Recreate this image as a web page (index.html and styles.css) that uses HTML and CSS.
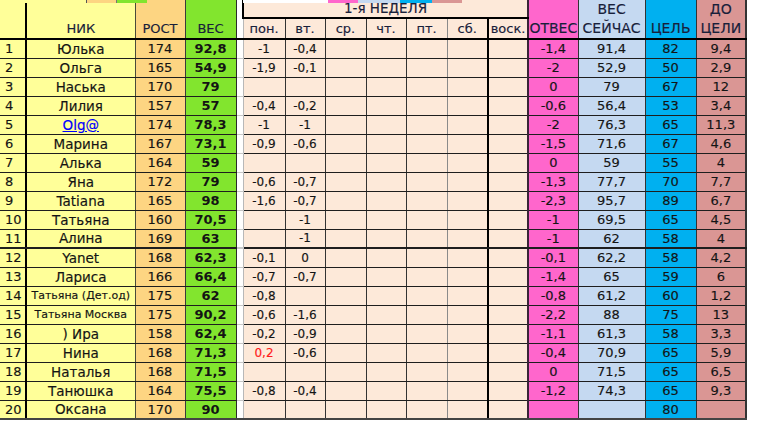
FILE: index.html
```html
<!DOCTYPE html>
<html lang="ru">
<head>
<meta charset="utf-8">
<title>Таблица</title>
<link rel="stylesheet" href="styles.css">
</head>
<body>
<div class="sheet">
<div class="ghost" aria-hidden="true">
<span class="gy1"></span><span class="go"></span><span class="gg"></span><span class="gw"></span><span class="gp"></span><span class="gc"></span><span class="gt"></span><span class="gl"></span>
</div>
<table class="tbl">
<colgroup>
<col style="width:26px"><col style="width:109px"><col style="width:50px"><col style="width:51px"><col style="width:7px">
<col style="width:42px"><col style="width:40px"><col style="width:41px"><col style="width:40px"><col style="width:41px"><col style="width:41px"><col style="width:40px">
<col style="width:50px"><col style="width:67px"><col style="width:51px"><col style="width:50px">
</colgroup>
<thead>
<tr class="ha">
<th class="n" rowspan="2"></th>
<th class="nk hb" rowspan="2">НИК</th>
<th class="r hb" rowspan="2">РОСТ</th>
<th class="w hb" rowspan="2">ВЕС</th>
<th class="g" rowspan="2"></th>
<th class="week" colspan="7">1-я НЕДЕЛЯ</th>
<th class="o hb hr" rowspan="2">ОТВЕС</th>
<th class="c hr" rowspan="2">ВЕС<br>СЕЙЧАС</th>
<th class="t hb hr" rowspan="2">ЦЕЛЬ</th>
<th class="l hr" rowspan="2">ДО<br>ЦЕЛИ</th>
</tr>
<tr class="hd">
<th class="d">пон.</th><th class="d">вт.</th><th class="d">ср.</th><th class="d">чт.</th><th class="d">пт.</th><th class="d">сб.</th><th class="d">воск.</th>
</tr>
</thead>
<tbody>
<tr><td class="n">1</td><td class="nk">Юлька</td><td class="r">174</td><td class="w">92,8</td><td class="g"></td><td class="d">-1</td><td class="d">-0,4</td><td class="d"></td><td class="d"></td><td class="d"></td><td class="d"></td><td class="d"></td><td class="o">-1,4</td><td class="c">91,4</td><td class="t">82</td><td class="l">9,4</td></tr>
<tr><td class="n">2</td><td class="nk">Ольга</td><td class="r">165</td><td class="w">54,9</td><td class="g"></td><td class="d">-1,9</td><td class="d">-0,1</td><td class="d"></td><td class="d"></td><td class="d"></td><td class="d"></td><td class="d"></td><td class="o">-2</td><td class="c">52,9</td><td class="t">50</td><td class="l">2,9</td></tr>
<tr><td class="n">3</td><td class="nk">Наська</td><td class="r">170</td><td class="w">79</td><td class="g"></td><td class="d"></td><td class="d"></td><td class="d"></td><td class="d"></td><td class="d"></td><td class="d"></td><td class="d"></td><td class="o">0</td><td class="c">79</td><td class="t">67</td><td class="l">12</td></tr>
<tr><td class="n">4</td><td class="nk">Лилия</td><td class="r">157</td><td class="w">57</td><td class="g"></td><td class="d">-0,4</td><td class="d">-0,2</td><td class="d"></td><td class="d"></td><td class="d"></td><td class="d"></td><td class="d"></td><td class="o">-0,6</td><td class="c">56,4</td><td class="t">53</td><td class="l">3,4</td></tr>
<tr><td class="n">5</td><td class="nk"><a class="link" href="#">Olg@</a></td><td class="r">174</td><td class="w">78,3</td><td class="g"></td><td class="d">-1</td><td class="d">-1</td><td class="d"></td><td class="d"></td><td class="d"></td><td class="d"></td><td class="d"></td><td class="o">-2</td><td class="c">76,3</td><td class="t">65</td><td class="l">11,3</td></tr>
<tr><td class="n">6</td><td class="nk">Марина</td><td class="r">167</td><td class="w">73,1</td><td class="g"></td><td class="d">-0,9</td><td class="d">-0,6</td><td class="d"></td><td class="d"></td><td class="d"></td><td class="d"></td><td class="d"></td><td class="o">-1,5</td><td class="c">71,6</td><td class="t">67</td><td class="l">4,6</td></tr>
<tr><td class="n">7</td><td class="nk">Алька</td><td class="r">164</td><td class="w">59</td><td class="g"></td><td class="d"></td><td class="d"></td><td class="d"></td><td class="d"></td><td class="d"></td><td class="d"></td><td class="d"></td><td class="o">0</td><td class="c">59</td><td class="t">55</td><td class="l">4</td></tr>
<tr><td class="n">8</td><td class="nk">Яна</td><td class="r">172</td><td class="w">79</td><td class="g"></td><td class="d">-0,6</td><td class="d">-0,7</td><td class="d"></td><td class="d"></td><td class="d"></td><td class="d"></td><td class="d"></td><td class="o">-1,3</td><td class="c">77,7</td><td class="t">70</td><td class="l">7,7</td></tr>
<tr><td class="n">9</td><td class="nk">Tatiana</td><td class="r">165</td><td class="w">98</td><td class="g"></td><td class="d">-1,6</td><td class="d">-0,7</td><td class="d"></td><td class="d"></td><td class="d"></td><td class="d"></td><td class="d"></td><td class="o">-2,3</td><td class="c">95,7</td><td class="t">89</td><td class="l">6,7</td></tr>
<tr><td class="n">10</td><td class="nk">Татьяна</td><td class="r">160</td><td class="w">70,5</td><td class="g"></td><td class="d"></td><td class="d">-1</td><td class="d"></td><td class="d"></td><td class="d"></td><td class="d"></td><td class="d"></td><td class="o">-1</td><td class="c">69,5</td><td class="t">65</td><td class="l">4,5</td></tr>
<tr class="thick"><td class="n">11</td><td class="nk">Алина</td><td class="r">169</td><td class="w">63</td><td class="g"></td><td class="d"></td><td class="d">-1</td><td class="d"></td><td class="d"></td><td class="d"></td><td class="d"></td><td class="d"></td><td class="o">-1</td><td class="c">62</td><td class="t">58</td><td class="l">4</td></tr>
<tr><td class="n">12</td><td class="nk">Yanet</td><td class="r">168</td><td class="w">62,3</td><td class="g"></td><td class="d">-0,1</td><td class="d">0</td><td class="d"></td><td class="d"></td><td class="d"></td><td class="d"></td><td class="d"></td><td class="o">-0,1</td><td class="c">62,2</td><td class="t">58</td><td class="l">4,2</td></tr>
<tr><td class="n">13</td><td class="nk">Лариса</td><td class="r">166</td><td class="w">66,4</td><td class="g"></td><td class="d">-0,7</td><td class="d">-0,7</td><td class="d"></td><td class="d"></td><td class="d"></td><td class="d"></td><td class="d"></td><td class="o">-1,4</td><td class="c">65</td><td class="t">59</td><td class="l">6</td></tr>
<tr><td class="n">14</td><td class="nk sm">Татьяна (Дет.од)</td><td class="r">175</td><td class="w">62</td><td class="g"></td><td class="d">-0,8</td><td class="d"></td><td class="d"></td><td class="d"></td><td class="d"></td><td class="d"></td><td class="d"></td><td class="o">-0,8</td><td class="c">61,2</td><td class="t">60</td><td class="l">1,2</td></tr>
<tr><td class="n">15</td><td class="nk sm">Татьяна Москва</td><td class="r">175</td><td class="w">90,2</td><td class="g"></td><td class="d">-0,6</td><td class="d">-1,6</td><td class="d"></td><td class="d"></td><td class="d"></td><td class="d"></td><td class="d"></td><td class="o">-2,2</td><td class="c">88</td><td class="t">75</td><td class="l">13</td></tr>
<tr><td class="n">16</td><td class="nk">) Ира</td><td class="r">158</td><td class="w">62,4</td><td class="g"></td><td class="d">-0,2</td><td class="d">-0,9</td><td class="d"></td><td class="d"></td><td class="d"></td><td class="d"></td><td class="d"></td><td class="o">-1,1</td><td class="c">61,3</td><td class="t">58</td><td class="l">3,3</td></tr>
<tr><td class="n">17</td><td class="nk">Нина</td><td class="r">168</td><td class="w">71,3</td><td class="g"></td><td class="d red">0,2</td><td class="d">-0,6</td><td class="d"></td><td class="d"></td><td class="d"></td><td class="d"></td><td class="d"></td><td class="o">-0,4</td><td class="c">70,9</td><td class="t">65</td><td class="l">5,9</td></tr>
<tr><td class="n">18</td><td class="nk">Наталья</td><td class="r">168</td><td class="w">71,5</td><td class="g"></td><td class="d"></td><td class="d"></td><td class="d"></td><td class="d"></td><td class="d"></td><td class="d"></td><td class="d"></td><td class="o">0</td><td class="c">71,5</td><td class="t">65</td><td class="l">6,5</td></tr>
<tr><td class="n">19</td><td class="nk">Танюшка</td><td class="r">164</td><td class="w">75,5</td><td class="g"></td><td class="d">-0,8</td><td class="d">-0,4</td><td class="d"></td><td class="d"></td><td class="d"></td><td class="d"></td><td class="d"></td><td class="o">-1,2</td><td class="c">74,3</td><td class="t">65</td><td class="l">9,3</td></tr>
<tr class="last"><td class="n">20</td><td class="nk">Оксана</td><td class="r">170</td><td class="w">90</td><td class="g"></td><td class="d"></td><td class="d"></td><td class="d"></td><td class="d"></td><td class="d"></td><td class="d"></td><td class="d"></td><td class="o"></td><td class="c"></td><td class="t">80</td><td class="l"></td></tr>
</tbody>
</table>
</div>
</body>
</html>
```
FILE: styles.css
```css
* { box-sizing: border-box; }
body {
  margin: 0;
  background: #fff;
  font-family: "DejaVu Sans", "Liberation Sans", sans-serif;
  color: #141414;
}
.sheet { position: relative; width: 770px; height: 437px; overflow: hidden; }

/* sliver of the row above, cut by the screenshot edge */
.ghost {
  position: absolute;
  left: 0;
  top: 0;
  height: 3px;
  display: flex;
  z-index: 2;
}
.ghost span { display: block; height: 3px; flex: none; }
.gy1 { width: 87px; border-right: 1px solid #555; background: #ffff99; }
.go  { width: 30px; background: #fdd582; border-right: 1px solid #777; }
.gg  { width: 30px; background: #82e52e; }
.gw  { width: 85px; margin-left: 96px; background: #fff; }
.gp  { width: 30px; background: #ff66cc; }
.gc  { width: 42px; background: #c5d9f1; }
.gt  { width: 32px; background: #00b0f0; }
.gl  { width: 30px; background: #da9694; }

.tbl {
  border-collapse: collapse;
  table-layout: fixed;
  width: 746px;
}
.tbl th, .tbl td {
  padding: 0;
  text-align: center;
  white-space: nowrap;
  overflow: hidden;
  -webkit-text-stroke: 0.15px currentColor;
}
.tbl th { font-weight: normal; color: #18203a; }

/* header */
.ha th { height: 18px; }
.hd th { height: 20px; }
.hb { vertical-align: bottom; font-size: 13px; line-height: 19px; padding-bottom: 1px; }
.hr { font-size: 14px; line-height: 19px; }
.c.hr, .l.hr { vertical-align: top; padding-top: 0; }
.o.hb, .t.hb { font-size: 14px; }
.week {
  background: #fde9d9;
  font-size: 13.5px;
  line-height: 17px;
  border-left: 2px solid #000;
  border-bottom: 2px solid #000;
  border-right: 2px solid #3a2438;
}
.hd th.d {
  font-size: 13px;
  vertical-align: bottom;
  padding-bottom: 2px;
}
thead th { border-bottom: 2px solid #000; }

/* column colours */
.n  { background: #ffff99; }
.nk { background: #ffff99; }
.r  { background: #fdd582; }
.w  { background: #82e52e; }
.g  { background: #fff; }
.d  { background: #fde9d9; }
.o  { background: #ff66cc; }
.c  { background: #c5d9f1; }
.t  { background: #00b0f0; }
.l  { background: #da9694; }

/* borders */
.tbl td { border-bottom: 1px solid #1e1e1e; height: 19px; }
.n  { border-right: 2px solid #000; }
.nk { border-right: 1px solid #4a4a3a; }
.r  { border-right: 1px solid #3a3a3a; }
.w  { border-right: 1px solid #2a2a2a; }
.g  { border-right: 1px solid #b8b8b8; }
.tbl td.g { border-bottom: 1px solid #c8c8c8; }
.d  { border-right: 1px solid #333; }
.d:nth-child(10) { border-right-color: #8a8a8a; }
.d:nth-child(11) { border-right: 2px solid #000; }
.d:nth-child(12) { border-right: 2px solid #3a2438; }
.hd th.d:nth-child(5) { border-right-color: #8a8a8a; }
.hd th.d:nth-child(6) { border-right: 2px solid #000; }
.hd th.d:nth-child(7) { border-right: 2px solid #3a2438; }
.hd th.d:nth-child(1) { border-left: 1px solid #b8b8b8; }
.o  { border-right: 1px solid #333; }
.c  { border-right: 1px solid #333; }
.t  { border-right: 1px solid #333; }
.l  { border-right: 2px solid #333; }
.tbl tr.thick td { border-bottom-width: 2px; }
.tbl tr.last td { border-bottom: 2px solid #444; }

/* cell text */
.tbl td.n  { text-align: left; padding-left: 5px; font-size: 13px; }
.tbl td.nk { font-size: 13.5px; }
.tbl td.nk.sm { font-size: 11px; }
.tbl td.r  { font-size: 13px; }
.tbl td.w  { font-size: 13px; font-weight: bold; -webkit-text-stroke: 0; }
.tbl td.d  { font-size: 12px; }
.tbl td.o, .tbl td.c, .tbl td.t, .tbl td.l { font-size: 13px; }
.red { color: #ff1a1a; }
.link { color: #0000ff; text-decoration: underline; }
```
